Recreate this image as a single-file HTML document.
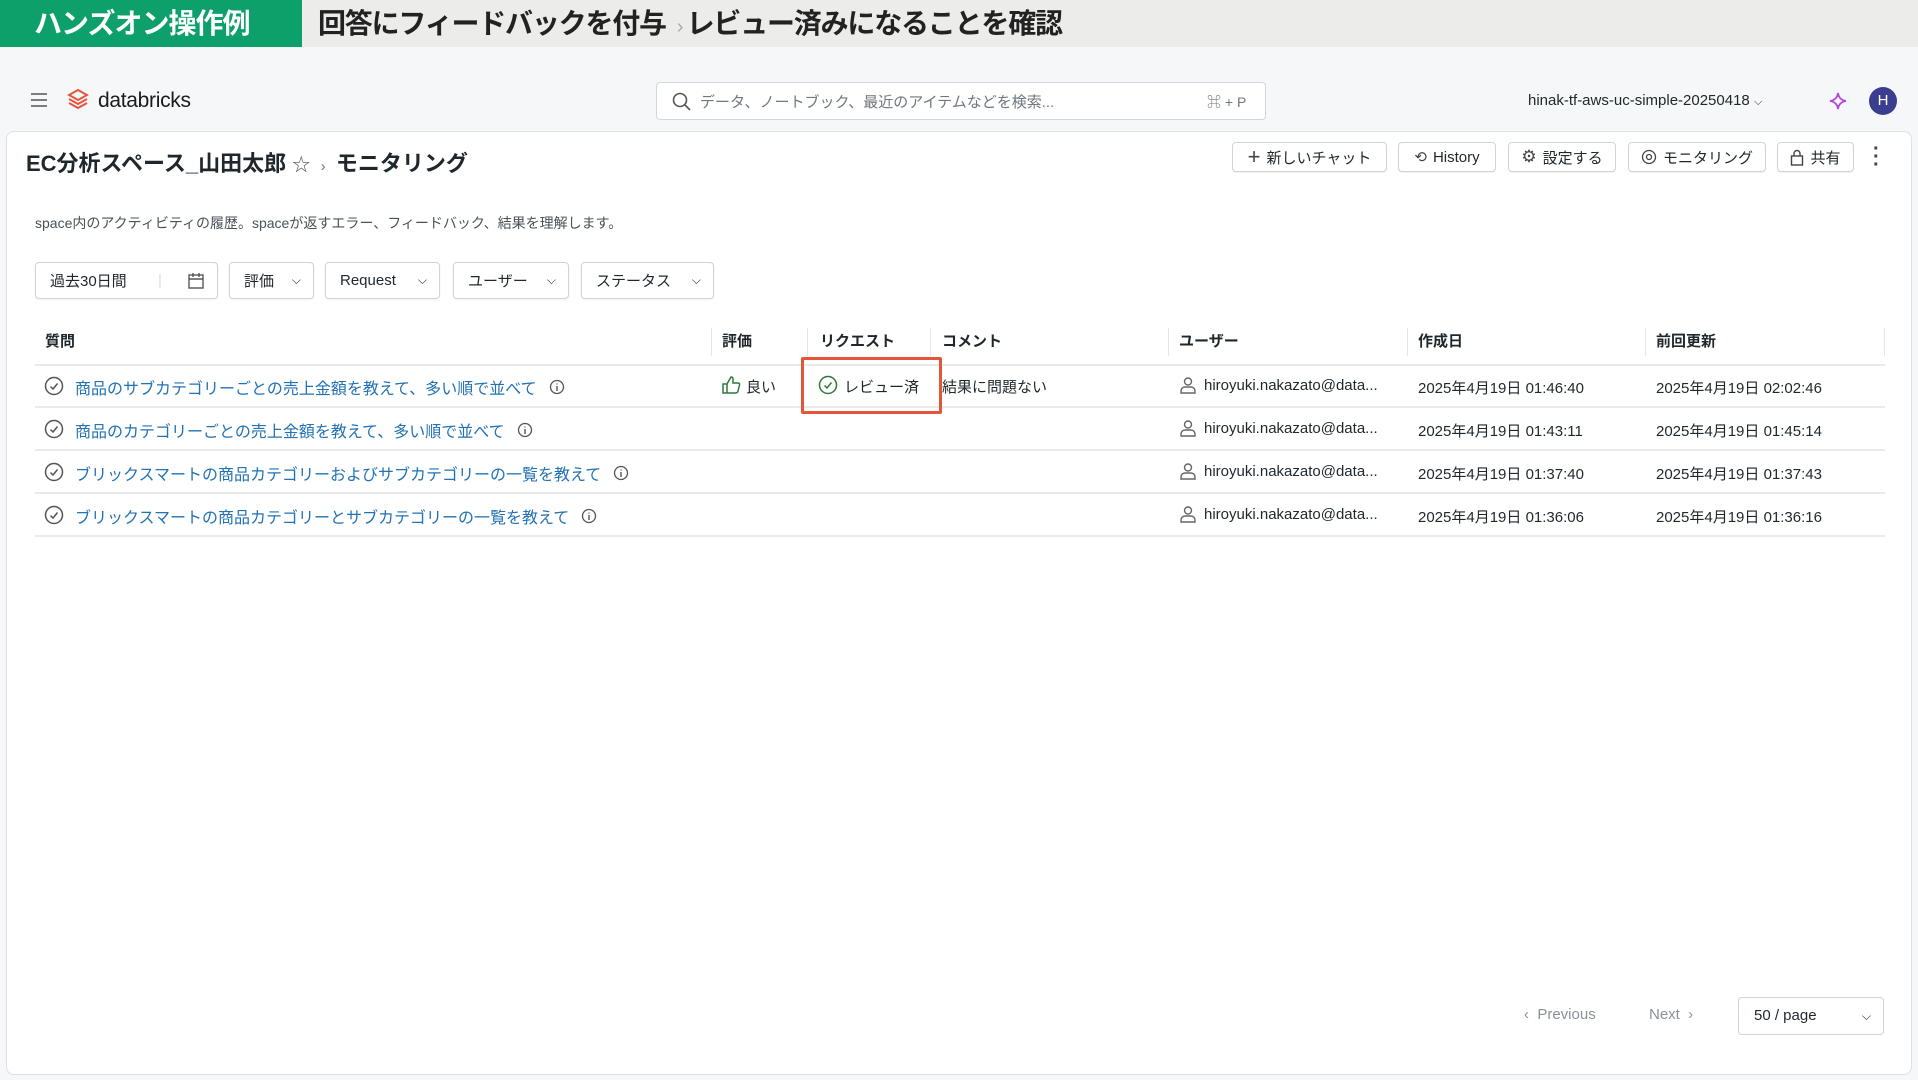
<!DOCTYPE html>
<html><head><meta charset="utf-8"><style>
*{box-sizing:border-box;margin:0;padding:0}
body{width:1918px;height:1080px;overflow:hidden;background:#f6f7f9;font-family:"Liberation Sans","Noto Sans CJK JP",sans-serif;color:#1f272d;position:relative}
.a{position:absolute;white-space:nowrap}
.btn{position:absolute;height:30px;border:1px solid #cfd4d9;border-radius:4px;background:#fff;font-size:15px;display:flex;align-items:center;justify-content:center;gap:6px;box-shadow:0 1px 1px rgba(0,0,0,.06)}
.flt{position:absolute;top:262px;height:37px;border:1px solid #cfd4d9;border-radius:4px;background:#fff;font-size:15px;display:flex;align-items:center;padding-left:14px;box-shadow:0 1px 2px rgba(0,0,0,.06)}
.flt .c{position:absolute;right:12px;top:9px}
.th{position:absolute;top:330px;font-size:15px;font-weight:bold}
.sep{position:absolute;top:328px;width:1px;height:28px;background:#e4e7ea}
.hl{position:absolute;left:35px;width:1850px;height:2px;background:#e8ebee}
.q{position:absolute;left:75px;font-size:16px;color:#2272b4;display:flex;align-items:center;gap:12px;white-space:nowrap}
.td{position:absolute;font-size:15px;white-space:nowrap}
</style></head><body>
<div class="a" style="left:0;top:0;width:1918px;height:47px;background:#ececea"></div>
<div class="a" style="left:0;top:0;width:302px;height:47px;background:#0ea06a;color:#fff;font-size:28px;font-weight:bold;line-height:47px;padding-left:34px;letter-spacing:-1px">ハンズオン操作例</div>
<div class="a" style="left:318px;top:0;line-height:47px;font-size:28px;font-weight:bold;color:#222;letter-spacing:-1.2px">回答にフィードバックを付与 <span style="color:#aaa;font-size:20px;font-weight:normal">&nbsp;›&nbsp;</span>レビュー済みになることを確認</div>

<svg class="a" style="left:30px;top:92px" width="18" height="16"><path d="M1 2h16M1 8h16M1 14h16" stroke="#555" stroke-width="1.6"/></svg>
<svg class="a" style="left:67px;top:88px" width="22" height="24" viewBox="0 0 22 24"><path d="M11 2L20 7 11 12 2 7Z M2 11l9 5 9-5 M2 15l9 5 9-5" fill="none" stroke="#e5533b" stroke-width="2"/></svg>
<div class="a" style="left:98px;top:89px;font-size:21px;color:#1b1b1b;letter-spacing:-0.3px">databricks</div>
<div class="a" style="left:656px;top:82px;width:610px;height:38px;border:1px solid #d3d7db;border-radius:4px;background:#fff"></div>
<svg class="a" style="left:672px;top:92px" width="20" height="20"><circle cx="8" cy="8" r="6.5" fill="none" stroke="#555" stroke-width="1.6"/><path d="M13 13l5 5" stroke="#555" stroke-width="1.6"/></svg>
<div class="a" style="left:700px;top:91px;font-size:15px;color:#6f7780">データ、ノートブック、最近のアイテムなどを検索...</div>
<div class="a" style="left:1207px;top:92px;font-size:14px;color:#6f7780">⌘ + P</div>
<div class="a" style="left:1528px;top:92px;font-size:15px">hinak-tf-aws-uc-simple-20250418 <span style="font-size:11px">⌵</span></div>
<svg class="a" style="left:1829px;top:92px" width="18" height="18" viewBox="0 0 18 18"><path d="M9 1Q10 8 17 9Q10 10 9 17Q8 10 1 9Q8 8 9 1Z" fill="none" stroke="#b04ad8" stroke-width="1.8"/></svg>
<div class="a" style="left:1869px;top:87px;width:28px;height:28px;border-radius:50%;background:#3b3d8f;color:#fff;font-size:15px;text-align:center;line-height:28px">H</div>

<div class="a" style="left:6px;top:131px;width:1906px;height:944px;background:#fff;border:1px solid #dde1e5;border-radius:8px"></div>
<div class="a" style="left:26px;top:146px;font-size:22px;font-weight:bold">EC分析スペース_山田太郎 <span style="font-weight:normal;font-size:18px;color:#555">☆</span> <span style="font-weight:normal;font-size:15px;color:#777">&nbsp;›&nbsp;</span> モニタリング</div>

<div class="btn" style="left:1232px;top:142px;width:155px"><span style="font-size:22px;color:#444;line-height:1">+</span>新しいチャット</div>
<div class="btn" style="left:1398px;top:142px;width:98px"><span style="font-size:15px;color:#444">⟲</span>History</div>
<div class="btn" style="left:1508px;top:142px;width:108px"><span style="font-size:17px;color:#444">⚙</span>設定する</div>
<div class="btn" style="left:1628px;top:142px;width:138px"><svg width="16" height="16"><circle cx="8" cy="8" r="6.5" fill="none" stroke="#444" stroke-width="1.3"/><circle cx="8" cy="8" r="2.5" fill="none" stroke="#444" stroke-width="1.3"/></svg>モニタリング</div>
<div class="btn" style="left:1777px;top:142px;width:77px"><svg width="14" height="17"><rect x="1.5" y="7" width="11" height="9" fill="none" stroke="#444" stroke-width="1.4"/><path d="M4 7V4.5a3 3 0 016 0V7" fill="none" stroke="#444" stroke-width="1.4"/></svg>共有</div>
<div class="a" style="left:1873px;top:145px;font-size:20px;color:#444;font-weight:bold;line-height:8px;text-align:center">·<br>·<br>·</div>

<div class="a" style="left:35px;top:213px;font-size:14px;color:#4a5158">space内のアクティビティの履歴。spaceが返すエラー、フィードバック、結果を理解します。</div>

<div class="flt" style="left:35px;width:183px">過去30日間<span style="position:absolute;left:122px;color:#ddd">|</span><svg class="c" width="18" height="18"><rect x="2" y="3" width="14" height="13" fill="none" stroke="#555" stroke-width="1.4"/><path d="M2 7h14M6 1v4M12 1v4" stroke="#555" stroke-width="1.4"/></svg></div>
<div class="flt" style="left:229px;width:85px">評価<span class="c" style="font-size:12px;top:10px">⌵</span></div>
<div class="flt" style="left:325px;width:115px">Request<span class="c" style="font-size:12px;top:10px">⌵</span></div>
<div class="flt" style="left:453px;width:116px">ユーザー<span class="c" style="font-size:12px;top:10px">⌵</span></div>
<div class="flt" style="left:581px;width:133px">ステータス<span class="c" style="font-size:12px;top:10px">⌵</span></div>

<div class="th" style="left:45px">質問</div>
<div class="sep" style="left:711px"></div><div class="th" style="left:722px">評価</div>
<div class="sep" style="left:807px"></div><div class="th" style="left:820px">リクエスト</div>
<div class="sep" style="left:930px"></div><div class="th" style="left:942px">コメント</div>
<div class="sep" style="left:1168px"></div><div class="th" style="left:1179px">ユーザー</div>
<div class="sep" style="left:1407px"></div><div class="th" style="left:1418px">作成日</div>
<div class="sep" style="left:1645px"></div><div class="th" style="left:1656px">前回更新</div>
<div class="sep" style="left:1884px"></div>
<div class="hl" style="top:364px"></div>
<div class="hl" style="top:406px"></div>
<div class="hl" style="top:449px"></div>
<div class="hl" style="top:492px"></div>
<div class="hl" style="top:535px"></div>

<svg width="0" height="0" style="position:absolute"><defs>
<symbol id="ck" viewBox="0 0 20 20"><circle cx="10" cy="10" r="8.5" fill="none" stroke="currentColor" stroke-width="1.5"/><path d="M6.5 10.5l2.5 2.5 4.5-5.5" fill="none" stroke="currentColor" stroke-width="1.5"/></symbol>
<symbol id="inf" viewBox="0 0 16 16"><circle cx="8" cy="8" r="6.5" fill="none" stroke="#555" stroke-width="1.3"/><path d="M8 7v5M8 4.5v1" stroke="#555" stroke-width="1.4"/></symbol>
<symbol id="usr" viewBox="0 0 18 18"><circle cx="9" cy="5.5" r="3.5" fill="none" stroke="#666" stroke-width="1.4"/><path d="M2 17v-2a4 4 0 014-4h6a4 4 0 014 4v2Z" fill="none" stroke="#666" stroke-width="1.4"/></symbol>
</defs></svg>

<!-- row 1 -->
<svg class="a" style="left:44px;top:376px;color:#555" width="20" height="20"><use href="#ck"/></svg>
<div class="q" style="top:375px">商品のサブカテゴリーごとの売上金額を教えて、多い順で並べて<svg width="16" height="16"><use href="#inf"/></svg></div>
<svg class="a" style="left:721px;top:375px" width="20" height="20" viewBox="0 0 20 20"><path d="M2 9h4v9H2Z M6 9l4-7q2 0 2 2v4h5q2 0 1.5 2l-1.5 6q-.5 2-2 2H6" fill="none" stroke="#2f7a3a" stroke-width="1.5"/></svg>
<div class="td" style="left:746px;top:376px">良い</div>
<svg class="a" style="left:818px;top:375px;color:#2f7a3a" width="20" height="20"><use href="#ck"/></svg>
<div class="td" style="left:844px;top:376px">レビュー済</div>
<div class="a" style="left:801px;top:357px;width:141px;height:57px;border:3px solid #e4553a;border-radius:2px"></div>
<div class="td" style="left:942px;top:376px">結果に問題ない</div>

<svg class="a" style="left:1179px;top:376px" width="18" height="18"><use href="#usr"/></svg>
<div class="td" style="left:1204px;top:377px">hiroyuki.nakazato@data...</div>
<div class="td" style="left:1418px;top:377px">2025年4月19日 01:46:40</div>
<div class="td" style="left:1656px;top:377px">2025年4月19日 02:02:46</div>
<!-- row 2 -->
<svg class="a" style="left:44px;top:419px;color:#555" width="20" height="20"><use href="#ck"/></svg>
<div class="q" style="top:418px">商品のカテゴリーごとの売上金額を教えて、多い順で並べて<svg width="16" height="16"><use href="#inf"/></svg></div>
<svg class="a" style="left:1179px;top:419px" width="18" height="18"><use href="#usr"/></svg>
<div class="td" style="left:1204px;top:420px">hiroyuki.nakazato@data...</div>
<div class="td" style="left:1418px;top:420px">2025年4月19日 01:43:11</div>
<div class="td" style="left:1656px;top:420px">2025年4月19日 01:45:14</div>
<!-- row 3 -->
<svg class="a" style="left:44px;top:462px;color:#555" width="20" height="20"><use href="#ck"/></svg>
<div class="q" style="top:461px">ブリックスマートの商品カテゴリーおよびサブカテゴリーの一覧を教えて<svg width="16" height="16"><use href="#inf"/></svg></div>
<svg class="a" style="left:1179px;top:462px" width="18" height="18"><use href="#usr"/></svg>
<div class="td" style="left:1204px;top:463px">hiroyuki.nakazato@data...</div>
<div class="td" style="left:1418px;top:463px">2025年4月19日 01:37:40</div>
<div class="td" style="left:1656px;top:463px">2025年4月19日 01:37:43</div>
<!-- row 4 -->
<svg class="a" style="left:44px;top:505px;color:#555" width="20" height="20"><use href="#ck"/></svg>
<div class="q" style="top:504px">ブリックスマートの商品カテゴリーとサブカテゴリーの一覧を教えて<svg width="16" height="16"><use href="#inf"/></svg></div>
<svg class="a" style="left:1179px;top:505px" width="18" height="18"><use href="#usr"/></svg>
<div class="td" style="left:1204px;top:506px">hiroyuki.nakazato@data...</div>
<div class="td" style="left:1418px;top:506px">2025年4月19日 01:36:06</div>
<div class="td" style="left:1656px;top:506px">2025年4月19日 01:36:16</div>

<div class="a" style="left:1524px;top:1006px;font-size:15px;color:#8a9199">‹ &nbsp;Previous</div>
<div class="a" style="left:1649px;top:1006px;font-size:15px;color:#8a9199">Next &nbsp;›</div>
<div class="a" style="left:1738px;top:997px;width:146px;height:38px;border:1px solid #cfd4d9;border-radius:4px;background:#fff;font-size:15px;line-height:36px;padding-left:15px">50 / page<span style="position:absolute;right:12px;font-size:12px">⌵</span></div>
</body></html>
